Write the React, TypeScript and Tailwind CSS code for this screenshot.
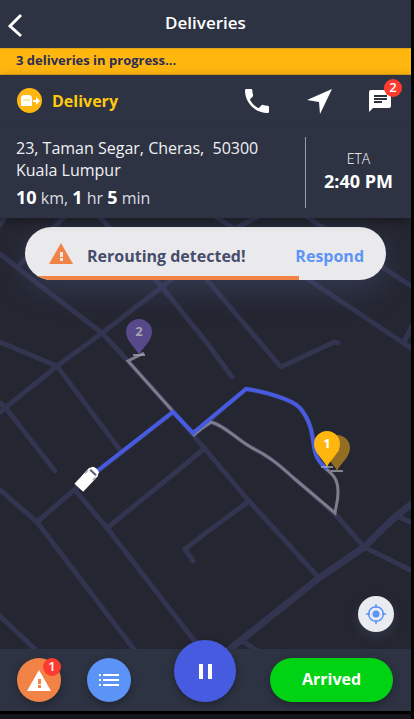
import type { ReactNode } from 'react';

const roads = [
  'M5 217L0 225',
  'M64 217L18 267',
  'M0 254L33 280L102 333L128 361L173 411L204 448L249 501L319 578',
  'M0 412L57 366L102 333L162 287L238 227L257 217',
  'M0 342L57 366L120 450',
  'M100 217L162 287L207 343L232 377',
  'M170 236L207 280L281 367L334 342L338 343',
  'M216 217L238 231L309 280L402 342L414 350',
  'M307 217L414 288',
  'M404 342L414 322',
  'M0 403L5 407L55 471',
  'M205 448L187 463L107 528',
  'M0 490L37 522L136 652',
  'M37 522L74 490L173 412',
  'M75 490L107 528L200 648',
  'M249 501L207 532L185 549L193 561',
  'M0 616L37 651',
  'M335 514L364 547L414 572',
  'M399 517L414 524',
  'M244 642L259 652',
  'M193 434L246 389C262 391 292 399 300 408C314 425 312 442 316 453C319 461 325 468 330 472',
  'M201 428L211 422C228 427 236 440 256 450C276 460 284 470 296 480L335 514',
];

function Pin({ x, y, color, label, labelColor }: { x: number; y: number; color: string; label: string; labelColor: string }) {
  return (
    <g transform={`translate(${x} ${y})`}>
      <rect x="-6" y="-1" width="12" height="2" fill="#a9abb5" opacity="0.7" />
      <path d="M0 0C-3 -7 -13 -14 -13 -23A13 13 0 0 1 13 -23C13 -14 3 -7 0 0Z" fill={color} />
      <text x="0" y="-19" textAnchor="middle" fontSize="13" fontWeight="700" fill={labelColor}>
        {label}
      </text>
    </g>
  );
}

function RouteMap() {
  return (
    <svg
      className="absolute inset-0 h-full w-full"
      viewBox="0 218 411 431"
      preserveAspectRatio="xMidYMid slice"
      role="img"
      aria-label="Route map"
    >
      <g fill="none" stroke="#33344f" strokeWidth="5" strokeLinecap="round" strokeLinejoin="round">
        {roads.map((d) => (
          <path key={d} d={d} />
        ))}
        <path d="M225 653L319 578L364 547L394 518L414 502" strokeWidth="7" />
      </g>
      <g fill="none" stroke="#7d7d8c" strokeWidth="3">
        <path d="M144 353L128 361L194 435L201 429L211 422C228 427 236 440 256 450C276 460 284 470 296 480L335 513C336 505 338 502 338 492C338 480 334 475 325 468" />
      </g>
      <path
        d="M92 475L173 412L193 433L246 389C262 391 292 399 300 408C314 425 312 440 315 452C317 460 321 464 327 469"
        fill="none"
        stroke="#475be1"
        strokeWidth="4"
      />
      <Pin x={139} y={355} color="#57498a" label="2" labelColor="#a5a1ad" />
      <Pin x={337} y={471} color="#936e22" label="1" labelColor="#a5977a" />
      <Pin x={327} y={467} color="#ffb70f" label="1" labelColor="#ffffff" />
      <g transform="translate(87 479) rotate(43)">
        <path d="M-6 12V-9L-4 -13Q0 -15 4 -13L6 -9V12Z" fill="#ffffff" />
        <path d="M-4 -8L-4 -10H4L4 -8Z" fill="#5a5c6e" />
        <path d="M-5 -7V-3M5 -7V-3" stroke="#9a9cab" />
      </g>
    </svg>
  );
}

function Badge({ children, className }: { children: ReactNode; className: string }) {
  return (
    <span
      className={`absolute flex size-[18px] items-center justify-center rounded-full bg-[#ff3b30] text-[13px] font-semibold text-white ${className}`}
    >
      {children}
    </span>
  );
}

function Warning({ className, mark }: { className: string; mark: string }) {
  return (
    <svg className={className} viewBox="0 0 24 21" fill="currentColor" aria-hidden="true">
      <path d="M12 0L24 21H0Z" />
      <path d="M11 9h3v5h-3zM11 15h3v3h-3z" fill={mark} />
    </svg>
  );
}

export default function App() {
  return (
    <div className="flex min-h-screen flex-col bg-black pr-[3px] font-['Open_Sans','Noto_Sans',sans-serif] text-white">
      <div className="mb-[3px] flex flex-1 flex-col overflow-hidden bg-[#242631]">
        <header className="relative flex h-12 items-center justify-center bg-[#2e3343] pb-[3px]">
          <button aria-label="Back" className="absolute top-3 left-2">
            <svg className="h-7 w-4" viewBox="0 0 16 28" fill="none" stroke="currentColor" strokeWidth="3" aria-hidden="true">
              <path d="M13 3L2 14L13 24" />
            </svg>
          </button>
          <h1 className="text-[17px] font-semibold">Deliveries</h1>
        </header>
        <p className="h-[27px] border-y border-[#e3a316] bg-[#ffb70f] px-4 text-[13px] leading-[22px] font-bold text-[#2b2d55]">
          3 deliveries in progress...
        </p>

        <section className="relative z-10 bg-[#2e3343] shadow-[0_3px_10px_rgba(0,0,0,0.35)]">
          <div className="flex h-[51px] items-center justify-between pr-5 pl-[17px]">
            <div className="flex items-center gap-[10px]">
              <svg className="size-[25px]" viewBox="0 0 25 25" aria-hidden="true">
                <circle cx="12.500" cy="12.500" r="12.500" fill="#ffb70f" />
                <path d="M6 7H13L15 9V18H4V9Z" fill="#ffffff" />
                <path d="M6 12H13" stroke="#ffdc8a" strokeWidth="1.500" />
                <path d="M16 12H19V9L23 13L19 17V14H16Z" fill="#ffffff" />
              </svg>
              <h2 className="text-base font-bold text-[#ffc90f]">Delivery</h2>
            </div>
            <div className="flex items-center gap-[37px]">
              <button aria-label="Call">
                <svg className="size-6" viewBox="3 3 18 18" fill="currentColor" aria-hidden="true">
                  <path d="M6.620 10.790c1.440 2.830 3.760 5.140 6.590 6.590l2.200-2.200c.27-.27.67-.36 1.020-.24 1.120.37 2.330.57 3.570.57.550 0 1 .45 1 1V20c0 .55-.45 1-1 1-9.390 0-17-7.610-17-17 0-.55.45-1 1-1h3.500c.55 0 1 .45 1 1 0 1.250.2 2.450.57 3.570.11.35.03.74-.25 1.020z" />
                </svg>
              </button>
              <button aria-label="Navigate">
                <svg className="size-[26px]" viewBox="0 0 26 26" fill="currentColor" aria-hidden="true">
                  <path d="M26 1L14 26L13 14L1 12Z" />
                </svg>
              </button>
              <button aria-label="Messages" className="relative">
                <svg className="size-[22px]" viewBox="0 0 22 22" aria-hidden="true">
                  <path d="M2 0H20Q22 0 22 2V16Q22 18 20 18H4L0 22V2Q0 0 2 0Z" fill="#ffffff" />
                  <path d="M5 6H18M5 9H18M5 12H13" stroke="#2e3343" strokeWidth="1.800" />
                </svg>
                <Badge className="-top-[11px] -right-[11px]">2</Badge>
              </button>
            </div>
          </div>

          <div className="flex h-[92px] items-center border-t border-[#2b3040]">
            <div className="flex-1 pt-[3px] pl-4">
              <p className="text-base leading-[22px] whitespace-pre-wrap text-[#f0f0f3]">{'23, Taman Segar, Cheras,  50300\nKuala Lumpur'}</p>
              <p className="mt-[2px] text-base leading-7 text-[#dcdde2]">
                <b className="text-lg font-bold text-white">10</b> km, <b className="text-lg font-bold text-white">1</b> hr{' '}
                <b className="text-lg font-bold text-white">5</b> min
              </p>
            </div>
            <div className="flex h-[71px] w-[106px] flex-col items-center justify-center border-l border-[#9a9ca8] pb-[3px]">
              <span className="text-sm leading-5 font-light">ETA</span>
              <span className="text-lg leading-6 font-bold">2:40 PM</span>
            </div>
          </div>
        </section>

        <main className="relative flex flex-1 flex-col px-[25px]">
          <RouteMap />
          <div
            role="alert"
            className="relative mt-[9px] flex h-[53px] items-center overflow-hidden rounded-full bg-[#eaeaec] pt-1 pr-[22px] pl-6 shadow-[0_10px_30px_rgba(75,88,130,0.4)]"
          >
            <Warning className="mb-1 w-6 text-[#f08345]" mark="#eaeaec" />
            <span className="ml-[14px] flex-1 text-base font-bold text-[#464c6c]">Rerouting detected!</span>
            <button className="text-base font-bold text-[#5c93f6]">Respond</button>
            <span className="absolute bottom-0 left-0 h-1 w-[274px] bg-[#f08345]" />
          </div>
          <button
            aria-label="Center on my location"
            className="absolute right-[17px] bottom-[17px] flex size-9 items-center justify-center rounded-full bg-[#e8ebf0] text-[#5c93f6] shadow-[0_5px_12px_rgba(80,85,120,0.35)]"
          >
            <svg className="size-5" viewBox="0 0 20 20" fill="none" stroke="currentColor" strokeWidth="1.500" aria-hidden="true">
              <circle cx="10" cy="10" r="7.300" />
              <circle cx="10" cy="10" r="3.500" fill="currentColor" stroke="none" />
              <path d="M10 0V4M10 16V20M0 10H4M16 10H20" />
            </svg>
          </button>
        </main>

        <footer className="relative grid h-[62px] grid-cols-[1fr_auto_1fr] items-center bg-[#2e3343] pr-[18px] pl-[17px]">
          <div className="flex gap-[26px]">
            <button
              aria-label="Alerts"
              className="relative flex size-11 items-center justify-center rounded-full bg-[#f08345] shadow-[0_3px_8px_rgba(0,0,0,0.3)]"
            >
              <Warning className="w-6" mark="#f08345" />
              <Badge className="top-0 right-0">1</Badge>
            </button>
            <button
              aria-label="Delivery list"
              className="flex size-11 items-center justify-center rounded-full bg-[#5c93f6] shadow-[0_3px_8px_rgba(0,0,0,0.3)]"
            >
              <svg className="h-3 w-5" viewBox="0 0 20 12" stroke="currentColor" strokeWidth="2" aria-hidden="true">
                <path d="M0 1H2M4 1H20M0 6H2M4 6H20M0 11H2M4 11H20" />
              </svg>
            </button>
          </div>
          <button
            aria-label="Pause"
            className="-mt-[18px] flex size-[62px] items-center justify-center rounded-full bg-[#475be1] shadow-[0_3px_8px_rgba(0,0,0,0.3)]"
          >
            <svg className="h-[15px] w-[13px]" viewBox="0 0 13 15" fill="currentColor" aria-hidden="true">
              <path d="M0 0H4V15H0zM9 0H13V15H9z" />
            </svg>
          </button>
          <button className="h-11 w-[123px] justify-self-end rounded-full bg-[#00d214] pb-[3px] text-base font-bold shadow-[0_3px_8px_rgba(0,0,0,0.3)]">
            Arrived
          </button>
        </footer>
      </div>
      <div className="h-[5px] bg-[#15161d]" />
    </div>
  );
}
